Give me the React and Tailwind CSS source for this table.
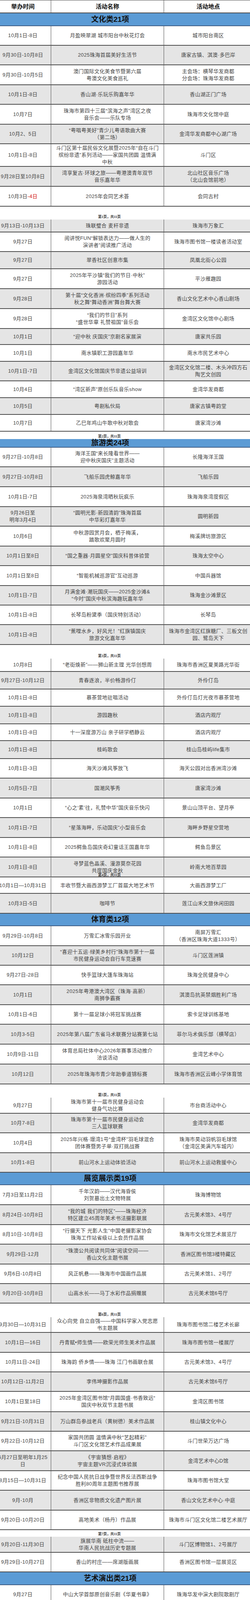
const RED = (
  <>
    10月3日<span className="text-[#d01010]">-4日</span>
  </>
);

// [height, gray, date, name, place, col3Gray]
const rows = [
  { t: 'head' },
  { t: 'cat', h: 33, title: '文化类21项' },
  [50, 0, '10月1日-8日', '月盈映翠湖 城市阳台中秋花灯会', '城市阳台南区'],
  [50, 1, '9月30日-10月8日', '2025珠海首届美好生活节', '唐家古镇、淇澳·多巴岸'],
  [51, 0, '9月30日-10月5日', '澳门国际文化美食节暨第六届\n粤澳文化美食巡礼', '主会场：横琴华发商都\n分会场：珠海华发商都'],
  [50, 1, '10月1日-8日', '香山湖·乐玩乐购嘉年华', '香山湖正门广场'],
  [51, 0, '10月7日', '珠海市第四十三届“滨海之声”湾区之夜\n音乐会——乐队专场', '珠海市文化馆中庭'],
  [50, 1, '10月2、5日', '“粤唱粤美好”青少儿粤语歌曲大赛\n（第二场）', '金湾华发商都中心湖广场'],
  [58, 0, '10月1日-8日', '斗门区第十届民俗文化展暨2025年“自在斗门\n缤纷非遗”系列活动——家国共团圆 温情满\n中秋', '斗门区'],
  [51, 1, '9月28日至10月8日', '湾享复古·环球之旅——粤港澳青年双节\n音乐嘉年华', '北山社区音乐广场\n（北山会馆前地）'],
  [51, 0, RED, '2025年会同艺术荟', '会同古村'],
  { t: 'brk', h: 33, p: 1 },
  [33, 1, '9月13日-10月13日', '珠联璧合 麦秆非遗', '珠海市万象汇'],
  [50, 0, '9月27日', '阅讲悦FUN“解锁表达力——做人生的\n演讲者”阅读推广活动', '珠海市图书馆一楼读者活动室'],
  [44, 1, '9月27日', '翠香社区创意市集', '凤凰北街心公园'],
  [51, 0, '9月27日', '2025年平沙镇“我们的节日·中秋”\n游园活动', '平沙雁趣园'],
  [51, 1, '9月28日', '第十届“文化香洲·缤纷四季”系列活动\n秋之舞“舞动香洲”舞台舞大赛', '香山文化艺术中心香山剧场'],
  [51, 0, '9月28日', '“我们的节日”系列\n“盛世华章 礼赞祖国”音乐会', '金湾区文化馆中心剧场'],
  [41, 1, '10月1日', '“迎中秋 庆国庆”京剧名家展演', '唐家共乐园'],
  [43, 0, '10月1日', '南水镇职工游园嘉年华', '南水市民艺术中心'],
  [50, 1, '10月1日-7日', '金湾区文化馆国庆节非遗公益培训', '金湾区文化馆二楼、木头冲四方石\n陶艺文创园'],
  [43, 0, '10月4日', '“湾区新声”原创乐队音乐show', '金湾华发商都'],
  [43, 1, '10月5日', '粤剧私伙局', '唐家古镇粤韵堂'],
  [43, 0, '10月7日', '乙巳年鸡山牛歌中秋对歌会', '唐家湾沙滩'],
  { t: 'brk', h: 19, p: 2 },
  { t: 'cat', h: 22, title: '旅游类24项' },
  [50, 0, '9月27日-10月8日', '海洋王国“来长隆看世界——\n迎中秋庆国庆”主题活动', '长隆海洋王国'],
  [51, 1, '9月27日-10月8日', '飞船乐园虎鲸嘉年华', '飞船乐园'],
  [51, 0, '10月1日-7日', '2025海泉湾晒秋玩疯乐', '珠海海泉湾度假区'],
  [50, 1, '9月26日至\n明年3月4日', '“圆明光影·新园清韵”珠海首届\n中华彩灯嘉年华', '圆明新园'],
  [51, 0, '10月6日', '中秋游园赏月会，栖于梅溪，\n踏歌欢聚月圆时', '梅溪牌坊旅游区'],
  [50, 1, '10月1日至8日', '“国之重器·月圆星空”国庆科普体验营', '珠海太空中心'],
  [51, 0, '10月1日至8日', '“智能机械巡游官”互动巡游', '中国兵器馆'],
  [50, 1, '10月1日-7日', '月满金滩·潮玩国庆——2025金沙滩&\n“今时”国庆中秋滨海趣玩嘉年华', '珠海金沙滩景区'],
  [50, 0, '10月1日-8日', '长琴岛粉黛季（国庆特别活动）', '长琴岛'],
  [51, 1, '10月1日-8日', '“蕉哩水乡，好风光！”红旗镇国庆\n旅游文化嘉年华', '珠海市金湾区红旗糖厂、三板文创\n园、鹭岛天下'],
  { t: 'brk', h: 35, p: 3 },
  [34, 0, '10月8日', '“老街焕新”——狮山新主理 光华创想周', '珠海市香洲区夏美路光华街'],
  [45, 1, '9月27日-10月12日', '青春逐浪，半价畅游伶仃', '外伶仃岛'],
  [44, 0, '10月1日-8日', '慕茶营地驻唱活动', '外伶仃岛灯光夜市慕茶营地'],
  [45, 1, '10月1日-8日', '游园趣秋', '酒店内观厅'],
  [43, 0, '10月1日-8日', '十一深度游万山 亲子研学栖静云', '酒店内观厅'],
  [46, 1, '10月1日-8日', '桂屿歌会', '桂山岛桂屿life集市'],
  [50, 0, '10月1日-3日', '海天沙滩风筝放飞', '海天公园对出香洲湾沙滩'],
  [51, 1, '10月5日-7日', '国潮风筝秀', '唐家湾沙滩'],
  [50, 0, '10月1日', '“心之‘素’往，礼赞中华”国庆音乐快闪', '景山山顶平台、望月亭'],
  [51, 1, '10月1日-7日', '“星落海畔，乐动国庆”小型音乐会', '海畔乡野星空营地'],
  [50, 0, '10月1日-8日', '2025鳄鱼岛国庆奇幻童话王国嘉年华', '鳄鱼岛景区'],
  [51, 1, '10月1日-8日', '寻梦蓝色晶溪、漫游莫奈花园\n共度国庆金秋', '岭南大地百草园'],
  { t: 'brk', h: 1, p: 4 },
  [41, 0, '10月1日—10月31日', '丰收节暨大画西游梦工厂首届大地艺术节', '大画西游梦工厂'],
  [51, 1, '10月3日-5日', '咖啡节', '莲江山禾文旅休闲田园'],
  { t: 'cat', h: 32, title: '体育类12项' },
  [51, 0, '9月29日-10月8日', '万雪汇冰雪乐园开业', '南屏万雪汇\n（香洲区珠海大道1333号）'],
  [50, 1, '10月12日', '“喜迎十五运·绿美乡村行”珠海市第十一届\n市民健身运动会自行车竞速赛', '斗门区莲洲镇'],
  [50, 0, '9月27日-28日', '快手篮球大篷车珠海站', '珠海全民健身中心'],
  [51, 1, '10月1日', '2025年粤港澳大湾区（珠海·高新）\n南狮争霸赛', '淇澳岛抗英禁烟胜利广场'],
  [50, 0, '10月1日-6日', '第十一届足球小将冠军挑战赛', '索卡足球训练基地'],
  [51, 1, '10月3-5日', '2025年第八届广东省马术联赛分站赛第七站', '菲尔马术俱乐部（横琴店）'],
  [51, 0, '10月9日-11日', '体育总局社体中心2026年赛事活动推介\n洽谈活动', '金湾艺术中心'],
  [51, 1, '10月12日', '2025年珠海市青少年跆拳道锦标赛', '珠海市香洲区云峰小学体育馆'],
  { t: 'brk', h: 34, p: 5 },
  [41, 0, '9月27日', '珠海市第十一届市民健身运动会\n健身气功比赛', '市台商活动中心'],
  [50, 1, '10月7-8日', '珠海市第十一届市民健身运动会\n三人篮球联赛', '金湾华发商都'],
  [51, 0, '10月4日', '2025年兴格·璟湾1号“金湾杯”羽毛球混合\n团体赛暨男子单·双打挑战赛', '珠海市昊动羽帆羽毛球馆\n（金湾区美满汽车城内）'],
  [50, 1, '10月1-8日', '前山河水上运动体验活动', '前山河水上运动救援中心'],
  { t: 'cat', h: 32, title: '展览展示类19项' },
  [51, 0, '7月3日至11月2日', '千年汉韵——汉代海昏侯\n刘贺墓出土文物特展', '珠海博物馆'],
  [51, 1, '8月24日-10月8日', '“我的城 我们的特区”——珠海经济\n特区建立45周年美术书法摄影联展', '古元美术馆3、4号厅'],
  [50, 0, '8月10日-10月8日', '“行摄天下 光影人生”中国老摄影家协会\n珠海工作站省级以上会员作品展', '珠海市文化馆艺术展览厅'],
  [51, 1, '9月29日-12月', '“珠澳公共阅读共同体”阅读空间——\n香山文化主题书展', '香洲区图书馆3楼特藏区'],
  [50, 0, '9月6日-10月8日', '风正帆悬——珠海市中国画作品展', '古元美术馆1、2号厅'],
  [50, 1, '9月20日-10月8日', '山高水长——马丁水彩作品捐赠展', '古元美术馆6号厅'],
  { t: 'brk', h: 35, p: 6 },
  [40, 0, '9月30日—10月31日', '众心向党 自立自强——中国科学家入党志愿\n书主题展', '珠海市图书馆二楼艺术长廊'],
  [51, 1, '10月1日—16日', '丹青赋•师生情——欧荣光师生美术作品展', '珠海市图书馆一楼展厅'],
  [50, 0, '10月11日-24日', '珠海韵 侨乡情——珠海 江门书画联合展', '古元美术馆3、4号厅'],
  [50, 1, '10月12日-11月2日', '李伟坤摄影作品展', '古元美术馆6号厅'],
  [52, 0, '10月1日至18日', '2025年金湾区图书馆“月圆国盛·书香致远“\n国庆中秋双节主题书展', '金湾区图书馆'],
  [50, 1, '9月21日-10月31日', '万山群岛参战老兵（黄树德）美术作品展', '桂山镇文化中心'],
  [50, 0, '9月22日-10月12日', '家国共团圆 温情满中秋“艺起精彩”\n斗门区文化馆艺术作品成果展', '斗门世荣万达广场'],
  [51, 1, '6月27日至明年1月25\n日', '《宇宙猜想·启程》\n宇宙主题VR沉浸式体验展', '金湾艺术中心D馆'],
  [50, 0, '8月15日—10月31日', '纪念中国人民抗日战争暨世界反法西斯战争\n胜利80周年主题图书推荐展', '珠海市图书馆大堂'],
  [51, 1, '9月-10月', '香洲区非物质文化遗产图片展', '香山文化艺术中心·中庭'],
  [50, 0, '9月20日-10月20日', '高地美术（杨丹）作品展', '珠海市斗门区文化馆二楼艺术展厅'],
  { t: 'brk', h: 17, p: 7 },
  [41, 1, '9月20日-11月30日', '旗展华南 砥柱中流——\n华南人民抗战历史专题展', '斗门区博物馆1、2号展厅'],
  [50, 0, '9月29日-10月27日', '香山的村庄——席湖版画展', '香洲区图书馆一层展览区'],
  { t: 'cat', h: 33, title: '艺术演出类21项' },
  [50, 0, '9月27日', '中山大学首部原创音乐剧《华夏书章》', '珠海华发中演大剧院歌剧厅'],
  [62, 1, '9月27日', '广州交响乐团x珠海华发中演大剧院 联合制\n作音乐双城季2025走进音乐厅·解码古典音乐\nDNA——广州交响乐团普及音乐会', '珠海华发中演大剧院音乐厅'],
  [50, 0, '9月29日', '音乐剧《喜欢你》', '金湾艺术中心'],
  [51, 1, '10月2日', '观念舞蹈戏剧《罗密欧AI朱丽叶》', '珠海保利大剧院'],
  [50, 0, '9月27日', '《还是要歌颂那些玉米地开出的花》\n象乐队巡演珠海站', '珠海乐士投资管理有限公司'],
  [51, 1, '9月27日', '严值高《何必西天万里遥》喜剧专场珠海站', '珠海市香洲区文化馆（香洲区文化\n中心）'],
  [50, 0, '9月27日', '二狗互动交友专场《一条名叫爱情的狗》', '金湾艺术中心'],
  [51, 1, '9月27日', '舞台剧《神探迈克狐-盛宴谜案》', '珠海保利大剧院'],
  { t: 'brk', h: 23, p: 8 },
  [40, 0, '9月28日', '天使计划 私享音乐会', '对白剧场'],
  [51, 1, '10月2日', '风与弦的对话-音乐会（竖琴、手碟专场）', '十字门华发商都'],
  [50, 0, '10月3日', '造梦大师·大型亲子互动魔幻秀', '珠海保利大剧院', 1],
  [50, 1, '10月3日', '魔幻雪景儿童舞台剧《冰雪女王》', '对白剧场'],
  [51, 0, '10月4日', '科幻探险儿童剧《飞向月球》', '对白剧场'],
  [51, 1, '10月4日', '宫崎骏&久石让印象集音乐会', '珠海保利大剧院'],
  [51, 0, '10月5日', '白日密语2025巡演「秘密出行」珠海站', '乐坊livehouse'],
  [50, 1, '10月6日', '音乐剧《LIZZIE丽兹》', '珠海保利大剧院'],
  [51, 0, '10月6日', '眼前人是心上人 中秋情歌演唱会', '乐坊livehouse'],
  [50, 1, '10月6日', '三好脱口秀', '华发中演大剧院'],
  [50, 0, '10月9日', '纣王老胡「取暖」2025巡回音乐会', '乐坊livehouse'],
  { t: 'brk', h: 17, p: 9 },
  [41, 1, '10月11日', '贝多芬的节奏诗篇：第四交响曲&第七交响曲', '华发中演大剧院'],
  [50, 0, '10月12日', '遇见大咖·刘仁铖丨史妍丨大雄\n单口喜剧脱口秀拼盘', '金湾艺术中心'],
  { t: 'cat', h: 33, title: '商业类12项' },
  [50, 0, '10月', '珠海印象城国庆中秋非遗活动', '珠海印象城'],
  [51, 1, '9-11月', 'ZERO·零度「企」境——珠海华发商都\n11周年狂欢庆典', '珠海华发商都'],
  [42, 0, '9-11月', '蝶觅秋踪艺术特展', '环宇城'],
  [40, 1, '9-10月', '街区猫咪及月亮展览', '富华里'],
  [51, 0, '10月-11月', '蝶变新生·盎然肆境 金湾华发商都2025年\n4周年庆活动', '金湾华发商都'],
  [41, 1, '10月-11月', '正光生活小镇·美食趣胃夜市', '金湾区红旗镇正光广场'],
  [51, 0, '10月1日-10月8日', '疯狂购物，一起来玩ya', '免税商场'],
  [50, 1, '9月26日至10月25日', '大有可玩&月发美好马戏团活动', '金发购物中心'],
  [50, 0, '10月1日-10月8日', '“跨月无限 南Fun好时节”\n斗门首届戏趣生活节', '珠海斗门世荣万达'],
  { t: 'brk', h: 12, p: 10 },
  [40, 1, '9月22日—10月31日', '大信新都汇双节活动', '大信新都汇'],
  [51, 0, '10月1日-10月8日', '潮BUY户外季·机械狂想派对', '珠海斗门招商花园城'],
  [51, 1, '10月1日-10月8日', '家和城宠粉时光 随10欢乐', '家和城'],
  { t: 'brk', h: 418, p: 11 },
];

export default function App() {
  return (
    <div className="h-[6182px] w-[640px] overflow-hidden bg-white font-['Liberation_Sans','Noto_Sans_CJK_SC',sans-serif]">
      {rows.map((r, i) => {
        if (Array.isArray(r)) return <Row key={i} r={r} />;
        if (r.t === 'head') return <Head key={i} />;
        if (r.t === 'cat') return <Category key={i} h={r.h} title={r.title} />;
        return <PageBreak key={i} h={r.h} page={r.p} />;
      })}
    </div>
  );
}

function Head() {
  return (
    <div className="grid h-[34px] grid-cols-[131px_289px_220px] overflow-hidden border-t border-b-2 border-[#4d4d4d] text-[15px] font-bold leading-[20px] text-[#111]">
      <div className="flex items-center justify-center border-r border-[#4d4d4d] pr-[13px]">举办时间</div>
      <div className="flex items-center justify-center border-r border-[#4d4d4d]">活动名称</div>
      <div className="flex items-center justify-center pl-[6px]">活动地点</div>
    </div>
  );
}

function Category({ h, title }) {
  return (
    <div className="flex shrink-0 items-center border-b-2 border-[#3f5f86] bg-[#5b9bd5]" style={{ height: h }}>
      <p className="w-[564px] text-center text-[19px] font-bold leading-[20px] text-[#111]">{title}</p>
    </div>
  );
}

function PageBreak({ h, page }) {
  return (
    <div className="flex flex-col justify-end pb-[1px]" style={{ height: h }}>
      <p className="w-[560px] text-center font-['Liberation_Serif','Noto_Sans_CJK_SC',serif] text-[9px] font-bold leading-[11px] text-[#333]">
        第{page}页，共11页
      </p>
    </div>
  );
}

function Row({ r }) {
  const [h, gray, date, name, place, c3] = r;
  const bg = gray ? 'bg-[#e5e5e5]' : 'bg-white';
  const cell = 'flex items-center justify-center overflow-hidden text-center whitespace-pre leading-[18px]';
  return (
    <div
      className={`grid grid-cols-[131px_289px_220px] grid-rows-1 overflow-hidden border-b-2 border-[#4d4d4d] text-[13px] tracking-[0.4px] text-[#444] ${bg}`}
      style={{ height: `${h}px` }}
    >
      <div className={`${cell} border-r border-[#4d4d4d] pr-[13px]`}>{date}</div>
      <div className={`${cell} border-r border-[#4d4d4d]`}>{name}</div>
      <div className={`${cell} pl-[6px] ${c3 ? 'bg-[#e5e5e5]' : ''}`}>{place}</div>
    </div>
  );
}
